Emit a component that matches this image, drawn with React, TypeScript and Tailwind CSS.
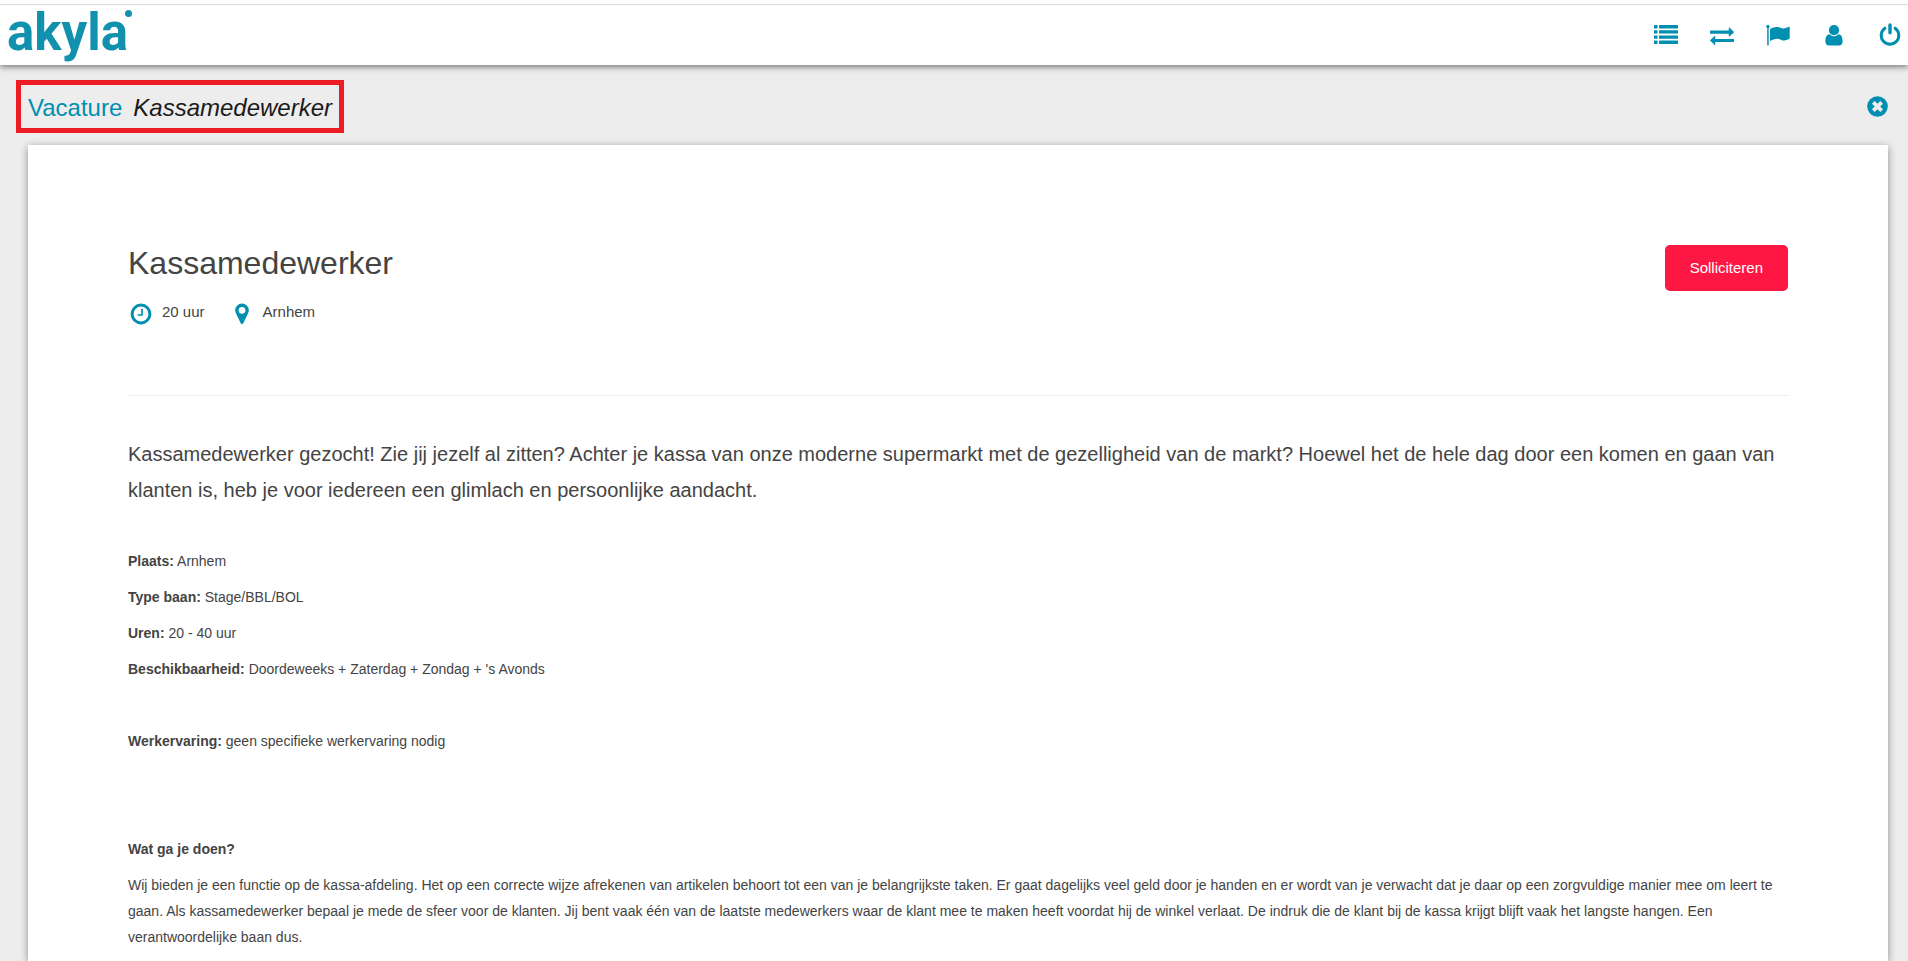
import React from "react";

type IconProps = { className?: string };

const ListIcon = ({ className }: IconProps) => (
  <svg aria-hidden="true" viewBox="0 0 24 20" className={className} fill="currentColor">
    {[0, 5.2, 10.4, 15.6].map((y) => (
      <g key={y}>
        <rect x="0" y={y} width="3.5" height="3.4" rx="0.4" />
        <rect x="5" y={y} width="19" height="3.4" rx="0.4" />
      </g>
    ))}
  </svg>
);

const ExchangeIcon = ({ className }: IconProps) => (
  <svg aria-hidden="true" viewBox="0 0 24 20" className={className} fill="currentColor">
    <path d="M0.4 5.6H18.8V2.8Q18.9 2.3 19.4 2.6L23.8 6.8Q24 7.1 23.8 7.4L19.4 11.6Q18.9 11.8 18.8 11.300V8.7H0.4Q0 8.7 0 8.3V6Q0 5.6 0.4 5.6Z" />
    <path d="M23.6 13.900H5.2V11.200Q5.1 10.700 4.6 10.900L0.2 15.200Q0 15.500 0.2 15.800L4.6 20Q5.1 20.200 5.2 19.700V17H23.6Q24 17 24 16.600V14.300Q24 13.900 23.6 13.900Z" />
  </svg>
);

const FlagIcon = ({ className }: IconProps) => (
  <svg aria-hidden="true" viewBox="0 0 24 22" className={className} fill="currentColor">
    <circle cx="1.9" cy="2.4" r="1.7" />
    <rect x="1.2" y="2.4" width="1.5" height="19.2" rx="0.5" />
    <path d="M4 5.100C7 3.200 9.500 2.600 12 3.100C14.200 3.500 15.200 4.600 17.400 4.500C19.400 4.400 21.400 3.400 23 2.800Q23.700 2.600 23.700 3.400V14.200Q23.700 14.800 23.100 15.100C21 16.200 18.800 16.900 16.700 16.400C14.500 15.900 13.300 14.600 10.800 14.700C8.500 14.800 6.600 15.800 4.800 16.800Q4 17.100 4 16.300Z" />
  </svg>
);

const UserIcon = ({ className }: IconProps) => (
  <svg aria-hidden="true" viewBox="0 0 18 22" className={className} fill="currentColor">
    <circle cx="9" cy="6.2" r="5.1" />
    <path d="M4.6 10.2C1.5 10.2 0.4 13.8 0.4 17.5C0.4 19.9 1.900 21.6 4 21.6H14C16.1 21.6 17.6 19.9 17.6 17.5C17.6 13.8 16.5 10.2 13.4 10.2C13 10.2 11.6 12.3 9 12.3C6.4 12.3 5 10.2 4.6 10.2Z" />
  </svg>
);

const PowerIcon = ({ className }: IconProps) => (
  <svg aria-hidden="true" viewBox="0 0 22 24" className={className} fill="none" stroke="currentColor" strokeWidth="3" strokeLinecap="round">
    <path d="M5.900 5.200A8.800 8.800 0 1 0 16.100 5.200" />
    <path d="M11 2V9.800" strokeWidth="3.400" />
  </svg>
);

const CloseIcon = ({ className }: IconProps) => (
  <svg aria-hidden="true" viewBox="0 0 22 22" className={className}>
    <circle cx="11" cy="11" r="10.8" fill="currentColor" />
    <path d="M8 8L14 14M14 8L8 14" stroke="#ededed" strokeWidth="4" strokeLinecap="square" />
  </svg>
);

const ClockIcon = ({ className }: IconProps) => (
  <svg aria-hidden="true" viewBox="0 0 22 22" className={className} fill="none" stroke="currentColor">
    <circle cx="11" cy="11" r="8.900" strokeWidth="3" />
    <path d="M12 5.800V12H7.600" strokeWidth="1.700" />
  </svg>
);

const PinIcon = ({ className }: IconProps) => (
  <svg aria-hidden="true" viewBox="0 0 14 22" className={className} fill="currentColor">
    <path fillRule="evenodd" d="M7 0.500A6.800 6.800 0 0 0 0.200 7.300C0.200 8.400 0.400 9.300 0.800 10L5.700 20.300C6.200 21.400 7.800 21.400 8.300 20.300L13.200 10C13.600 9.300 13.800 8.400 13.800 7.300A6.800 6.800 0 0 0 7 0.500ZM7 3.900A3.400 3.400 0 1 1 7 10.700A3.400 3.400 0 0 1 7 3.900Z" />
  </svg>
);

const navItems = [
  { label: "Overzicht", icon: <ListIcon className="h-5 w-6" /> },
  { label: "Wisselen", icon: <ExchangeIcon className="h-5 w-6" /> },
  { label: "Meldingen", icon: <FlagIcon className="h-[22px] w-6" /> },
  { label: "Profiel", icon: <UserIcon className="h-[22px] w-[18px]" /> },
  { label: "Uitloggen", icon: <PowerIcon className="h-6 w-[22px]" /> },
];

const Fact = ({ label, children }: { label: string; children: React.ReactNode }) => (
  <p>
    <strong>{label}:</strong> {children}
  </p>
);

export default function App() {
  return (
    <div className="flex min-h-screen flex-col bg-[#ededed] font-['Liberation_Sans',Arial,sans-serif] text-[#444]">
      <header className="relative bg-white pt-1 shadow-[0_2px_6px_rgba(0,0,0,0.5)]">
        <div className="flex h-[61px] items-center justify-between border-t border-[#d9d9de] pr-[6px] pl-[7px]">
          <a href="#" className="relative block pr-1 pb-1 font-[Roboto,sans-serif] text-[51px] leading-[56px] font-bold text-[#1191ad]">
            akyla
            <span className="absolute top-[5px] right-0 size-[7px] rounded-full bg-[#1191ad]" />
          </a>
          <nav className="flex items-center gap-8 text-[#008fb0]">
            {navItems.map((item) => (
              <a key={item.label} href="#" aria-label={item.label} className="flex w-6 justify-center">
                {item.icon}
              </a>
            ))}
          </nav>
        </div>
      </header>

      <main className="flex flex-1 flex-col px-5 pt-[15px] pl-7">
        <div className="mb-3 -ml-3 flex items-center justify-between">
          <h1 className="flex gap-[11px] border-5 border-[#ee1c25] px-[7px] pt-[9px] pb-[7px] text-2xl leading-[27px]">
            <span className="text-[#008fb0]">Vacature</span>
            <em className="text-[#1a1a1a]">Kassamedewerker</em>
          </h1>
          <button type="button" aria-label="Sluiten" className="text-[#008fb0]">
            <CloseIcon className="size-[21px]" />
          </button>
        </div>

        <article className="flex-1 bg-white px-25 pt-25 shadow-[0_2px_8px_rgba(0,0,0,0.4)]">
          <div className="flex items-start justify-between border-b border-[#eee] pb-[70px]">
            <div>
              <h2 className="text-[32px] leading-9">Kassamedewerker</h2>
              <ul className="mt-[18px] flex gap-[30px] pl-[2px] text-[15px] leading-6">
                <li className="flex items-center gap-[10px]">
                  <ClockIcon className="mt-1 size-[22px] text-[#008fb0]" />
                  20 uur
                </li>
                <li className="flex items-center gap-[14px]">
                  <PinIcon className="mt-1 h-[22px] w-[14px] text-[#008fb0]" />
                  Arnhem
                </li>
              </ul>
            </div>
            <button type="button" className="h-[46px] rounded-[5px] bg-[#ff1744] px-[25px] text-[15px] text-white">
              Solliciteren
            </button>
          </div>

          <p className="mt-10 text-xl leading-9">
            Kassamedewerker gezocht! Zie jij jezelf al zitten? Achter je kassa van onze moderne supermarkt met de
            gezelligheid van de markt? Hoewel het de hele dag door een komen en gaan van klanten is, heb je voor
            iedereen een glimlach en persoonlijke aandacht.
          </p>

          <div className="mt-10 flex flex-col gap-[10px] text-sm leading-[26px]">
            <Fact label="Plaats">Arnhem</Fact>
            <Fact label="Type baan">Stage/BBL/BOL</Fact>
            <Fact label="Uren">20 - 40 uur</Fact>
            <Fact label="Beschikbaarheid">Doordeweeks + Zaterdag + Zondag + 's Avonds</Fact>
            <div className="mt-9">
              <Fact label="Werkervaring">geen specifieke werkervaring nodig</Fact>
            </div>
            <h3 className="mt-18 font-bold">Wat ga je doen?</h3>
            <p>
              Wij bieden je een functie op de kassa-afdeling. Het op een correcte wijze afrekenen van artikelen behoort
              tot een van je belangrijkste taken. Er gaat dagelijks veel geld door je handen en er wordt van je verwacht
              dat je daar op een zorgvuldige manier mee om leert te gaan. Als kassamedewerker bepaal je mede de sfeer
              voor de klanten. Jij bent vaak één van de laatste medewerkers waar de klant mee te maken heeft voordat hij
              de winkel verlaat. De indruk die de klant bij de kassa krijgt blijft vaak het langste hangen. Een
              verantwoordelijke baan dus.
            </p>
          </div>
        </article>
      </main>
    </div>
  );
}
